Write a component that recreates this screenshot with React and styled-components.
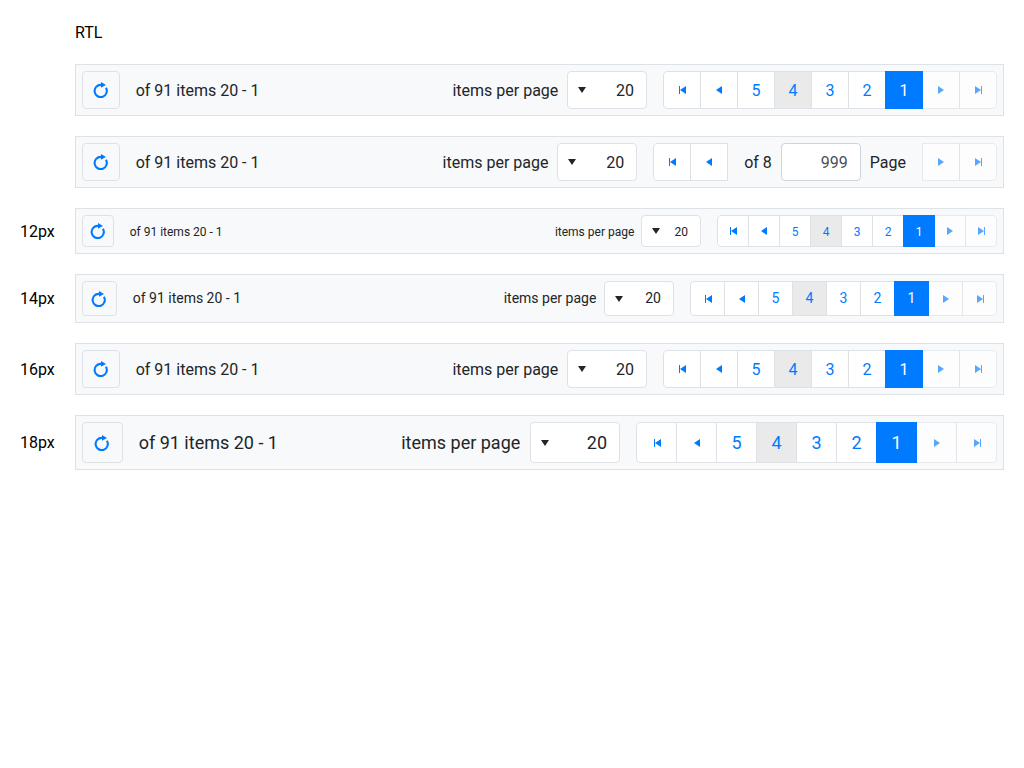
import React from 'react';
import styled, { createGlobalStyle, css } from 'styled-components';

const GlobalStyle = createGlobalStyle`
  *, *::before, *::after { box-sizing: border-box; }
  body {
    margin: 0;
    background: #fff;
    color: #000;
    font: 16px/24px Roboto, "Liberation Sans", sans-serif;
  }
`;

const Page = styled.main`
  padding: 21px 20px 0;
`;

const Heading = styled.div`
  margin: 0 0 19px 55px;
`;

const Rows = styled.div`
  display: flex;
  flex-direction: column;
  gap: 20px;
`;

const Row = styled.section`
  display: grid;
  grid-template-columns: 55px 929px;
  align-items: center;
`;

const Bar = styled.div`
  display: flex;
  align-items: center;
  padding: 6px;
  border: 1px solid #dee2e6;
  background: #f8f9fa;
  color: #212529;
  font-size: ${(p) => p.$size}px;
  line-height: 1.5;
  white-space: nowrap;
`;

const Text = styled.span`
  padding-top: ${(p) => (p.$size % 4 === 0 ? 2 : 0)}px;
`;

const square = css`
  flex: none;
  display: flex;
  align-items: center;
  justify-content: center;
  width: calc(1.5em + 14px);
  height: calc(1.5em + 14px);
  padding: 0;
  border: 1px solid #dee2e6;
  font: inherit;
  color: #007bff;
`;

const RefreshButton = styled.button`
  ${square}
  padding-right: 0.8px;
  border-radius: 4px;
  background: transparent;
`;

const Info = styled(Text)`
  margin-left: 15.7px;
  margin-right: auto;
`;

const SizeLabel = styled(Text)`
  margin-right: calc(0.5em + 0.7px);
`;

const Select = styled.div`
  display: flex;
  align-items: center;
  justify-content: space-between;
  width: 5em;
  height: calc(1.5em + 14px);
  padding: 0 12px 0 6px;
  margin-right: 16px;
  border: 1px solid #dee2e6;
  border-radius: 4px;
  background: #fff;
`;

const PageList = styled.div`
  display: flex;
  border-radius: ${(p) => p.$radius || '4px'};
  overflow: hidden;
`;

const PageButton = styled.button`
  ${square}
  background: ${(p) => (p.$hover ? '#eaeaea' : '#fff')};
  opacity: ${(p) => (p.disabled ? 0.65 : 1)};
  position: relative;

  & + & { margin-left: -1px; }
  &:first-child { border-radius: ${(p) => (p.$end === 'left' ? '4px 0 0 4px' : '0')}; }
  &:last-child { border-radius: ${(p) => (p.$end === 'right' ? '0 4px 4px 0' : '0')}; }

  ${(p) => p.$active && css`
    z-index: 1;
    border-color: #007bff;
    background: #007bff;
    color: #fff;
  `}
`;

const PageInputGroup = styled.div`
  display: flex;
  align-items: center;
  gap: 9px;
  margin: 0 16px;
`;

const PageInput = styled.input`
  width: 5em;
  height: calc(1.5em + 14px);
  padding: 0 12px;
  border: 1px solid #ced4da;
  border-radius: 4px;
  background: #fff;
  color: #495057;
  font: inherit;
  text-align: right;
`;

const Svg = styled.svg`
  display: block;
  flex: none;
  width: 16px;
  height: 16px;
  fill: currentColor;
`;

const shapes = {
  first: <path d="M5 4h1v8H5zM12 4v8L6 8z" />,
  prev: <path d="M11 4v8L5 8z" />,
  next: <path d="M5 4v8l6-4z" />,
  last: <path d="M5 4v8l6-4zM11 4h1v8h-1z" />,
  down: <path d="M4 5h8l-4 6z" />,
  reload: (
    <>
      <path d="M12.9 5.8A6.1 6.1 0 1 1 8 2.9H9" fill="none" stroke="currentColor" strokeWidth="2.1" />
      <path d="M8 0l5 2.9L8 5.8z" />
    </>
  ),
};

const Icon = ({ name }) => (
  <Svg viewBox="0 0 16 16" aria-hidden="true">{shapes[name]}</Svg>
);

const Back = () => (
  <>
    <PageButton $end="left" aria-label="Last page"><Icon name="first" /></PageButton>
    <PageButton aria-label="Next page"><Icon name="prev" /></PageButton>
  </>
);

const Forward = () => (
  <>
    <PageButton disabled aria-label="Previous page"><Icon name="next" /></PageButton>
    <PageButton disabled $end="right" aria-label="First page"><Icon name="last" /></PageButton>
  </>
);

const Pager = ({ size = 16, input }) => (
  <Bar $size={size}>
    <RefreshButton aria-label="Refresh"><Icon name="reload" /></RefreshButton>
    <Info $size={size}>of 91 items 20 - 1</Info>
    <SizeLabel $size={size}>items per page</SizeLabel>
    <Select><Icon name="down" /><Text $size={size}>20</Text></Select>
    {input ? (
      <>
        <PageList $radius="4px 0 0 4px"><Back /></PageList>
        <PageInputGroup>
          <Text $size={size}>of 8</Text>
          <PageInput defaultValue="999" />
          <Text $size={size}>Page</Text>
        </PageInputGroup>
        <PageList $radius="0 4px 4px 0"><Forward /></PageList>
      </>
    ) : (
      <PageList>
        <Back />
        {[5, 4, 3, 2, 1].map((n) => (
          <PageButton key={n} $hover={n === 4} $active={n === 1}>
            <Text $size={size}>{n}</Text>
          </PageButton>
        ))}
        <Forward />
      </PageList>
    )}
  </Bar>
);

export default function App() {
  return (
    <>
      <GlobalStyle />
      <Page>
        <Heading>RTL</Heading>
        <Rows>
          <Row><span /><Pager /></Row>
          <Row><span /><Pager input /></Row>
          {[12, 14, 16, 18].map((size) => (
            <Row key={size}><Text $size={size}>{size}px</Text><Pager size={size} /></Row>
          ))}
        </Rows>
      </Page>
    </>
  );
}
